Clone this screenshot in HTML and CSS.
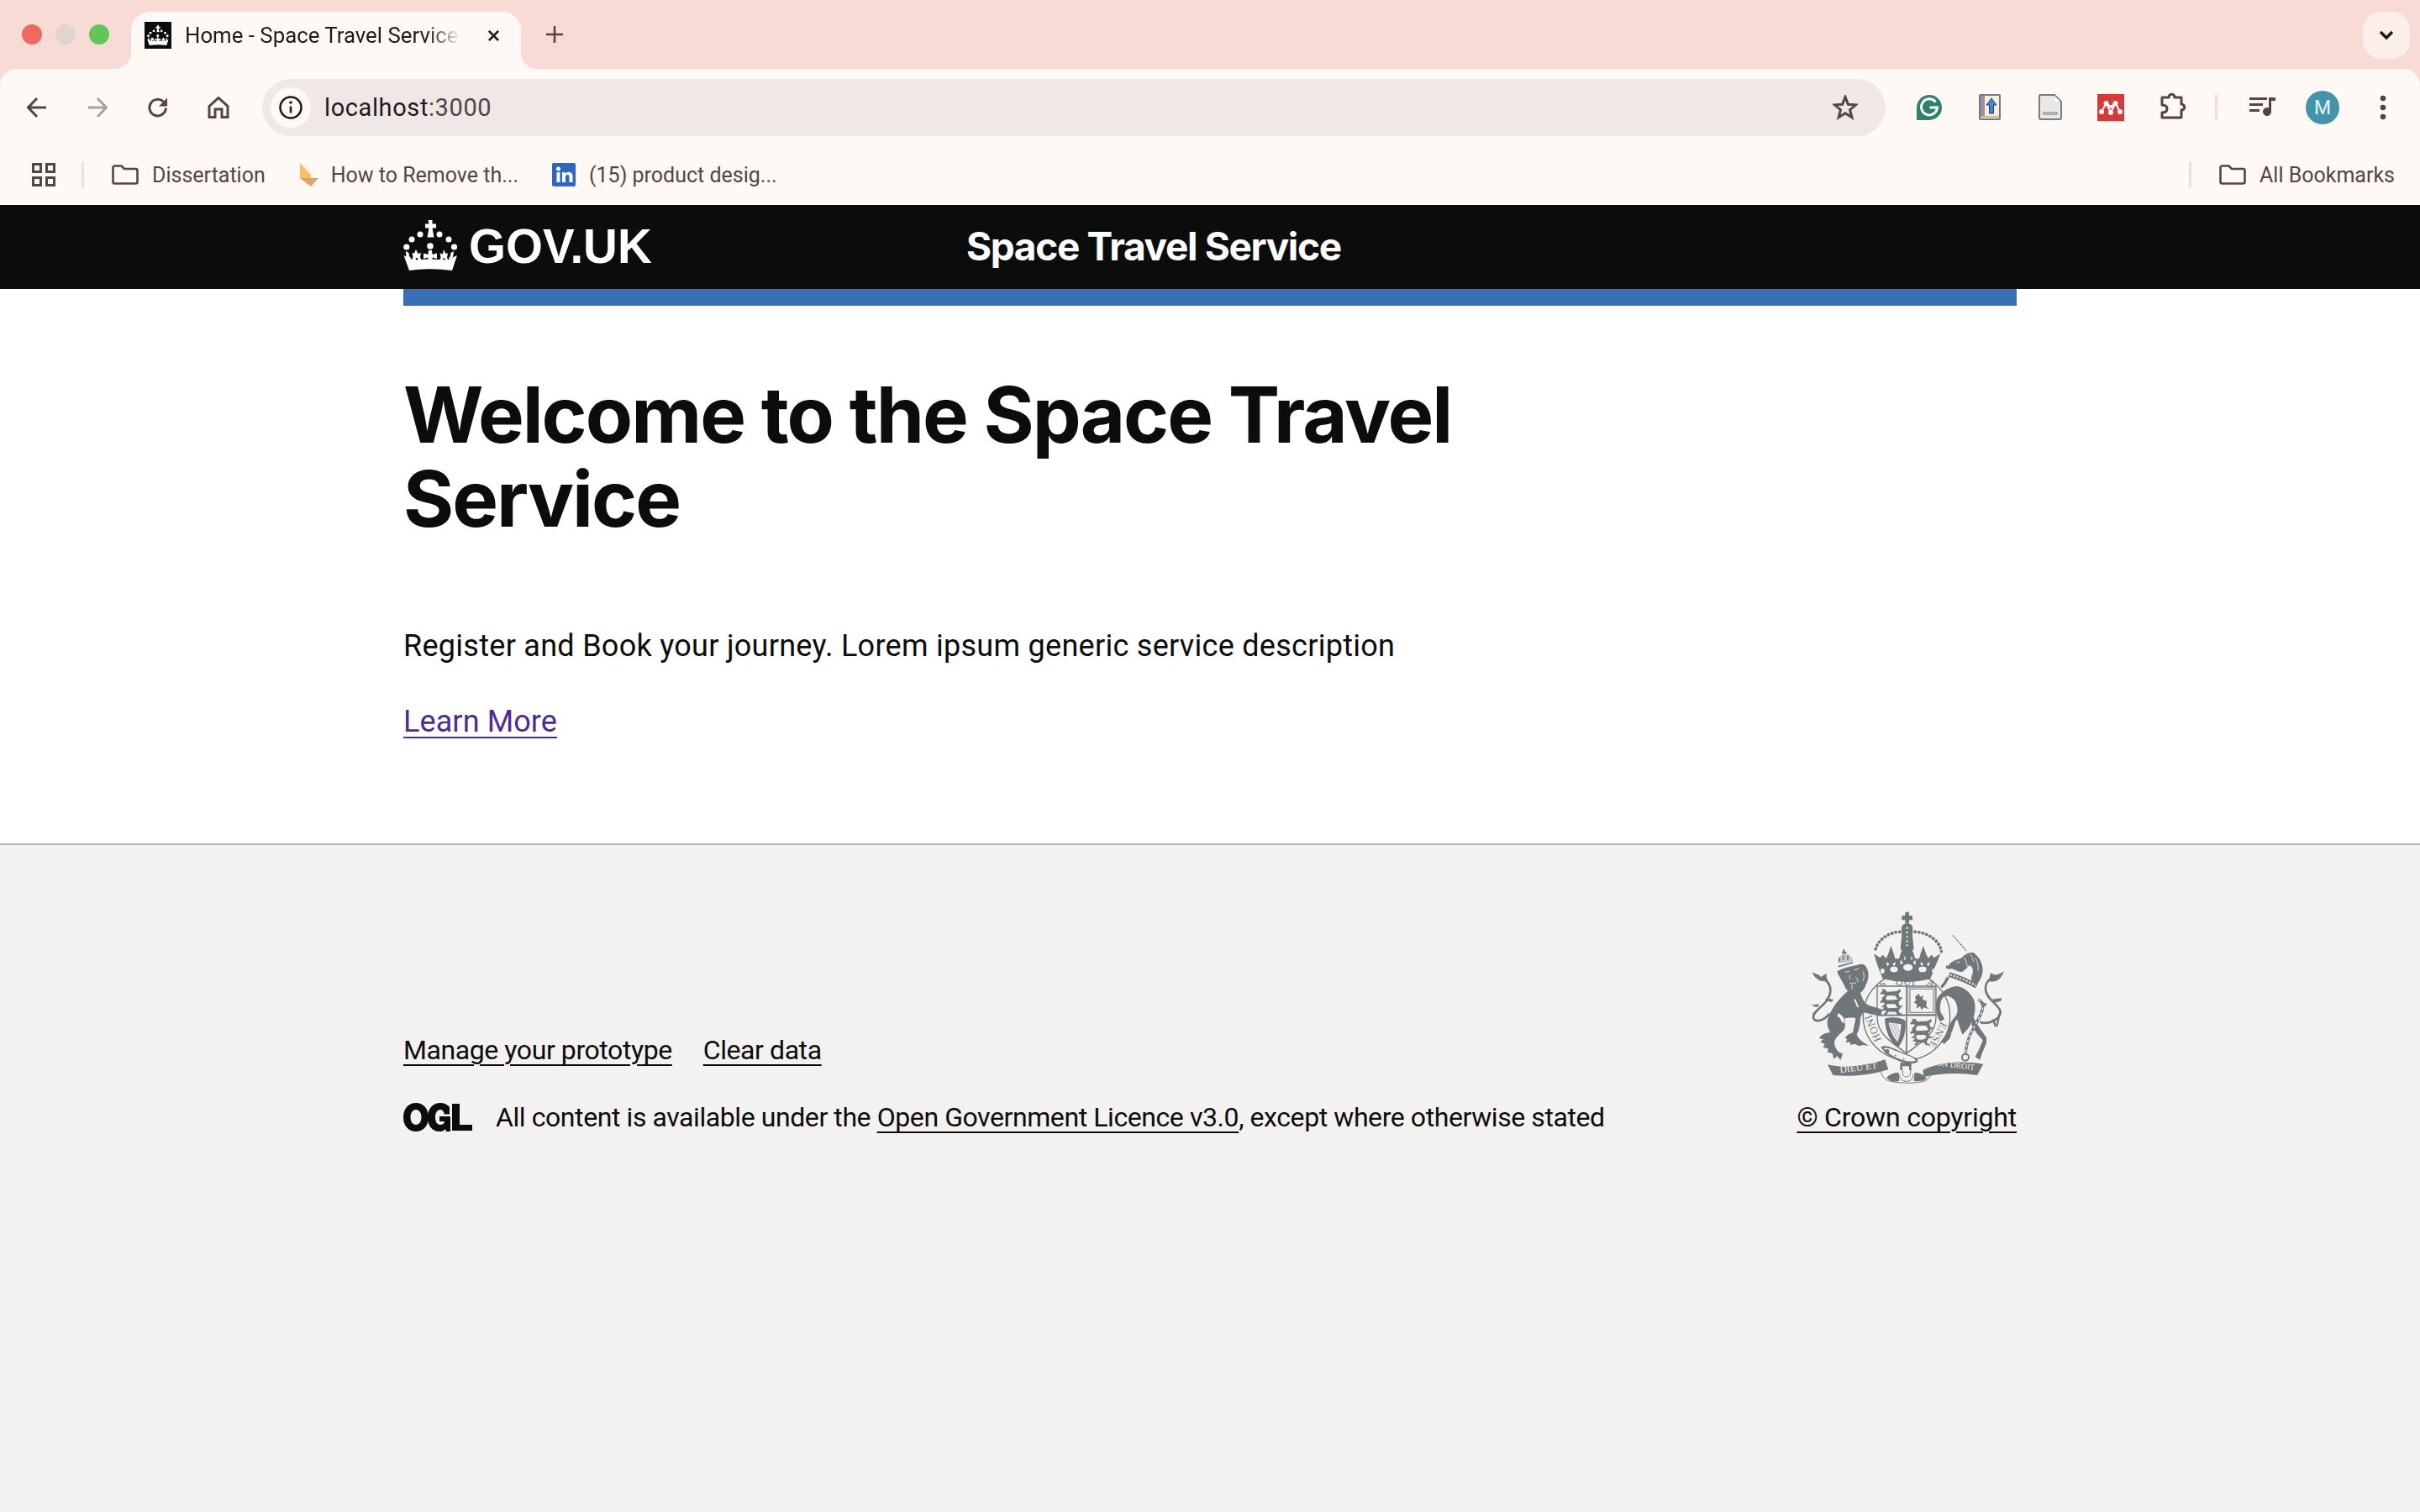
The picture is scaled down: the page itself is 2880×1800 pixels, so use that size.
FILE: index.html
```html
<!DOCTYPE html>
<html lang="en">
<head>
<meta charset="utf-8">
<title>Home - Space Travel Service</title>
<link rel="stylesheet" href="styles.css">
</head>
<body>
<svg class="defs" width="0" height="0" aria-hidden="true">
  <symbol id="crown" viewBox="0 0 65 60">
    <g fill="#fff">
      <path d="M29.500 0h5v4.500h4.500v5h-4.500l2 11h-8l2-11h-4.500v-5h4.500z"/>
      <circle cx="20" cy="17" r="3.500"/><circle cx="43" cy="17" r="3.500"/>
      <circle cx="10" cy="23" r="3.500"/><circle cx="54" cy="23" r="3.500"/>
      <circle cx="3.800" cy="32" r="3.600"/><circle cx="60.500" cy="32" r="3.600"/>
      <circle cx="32" cy="31" r="3.800"/>
      <path d="M.5 42l11 5.500 20.500-1 20.500 1 11.500-5.500-6 18Q32 56.500 7 60z"/>
      <path d="M30 36h4l.5 5 5.500-1.500V46l-5.500-1.500V49h-5v-4.500L24 46v-6.500l5.500 1.500z"/>
      <path d="M15 35l2.500 5 3.500-1-1 5 1.500 4h-4l-.5-3-2 0-.5 3H10l1.500-4-1-5 2.500.5z"/>
      <path d="M48 35l2.500 5 2.500-.5-1 5 1.500 4H50l-.5-3-2 0-.5 3h-4l1.500-4-1-5 3.500 1z"/>
      <path d="M3 37l3.500 2 .5 4 2 2-1 1.500L3.500 44zM60 37l-3.500 2-.5 4-2 2 1 1.500 4-2.500z"/>
    </g>
  </symbol>
  <symbol id="folder" viewBox="0 0 32 24">
    <path fill="none" stroke="currentColor" stroke-width="2.600" stroke-linejoin="round" d="M1.500 3.500a2 2 0 0 1 2-2h8l3.500 3.500h13.500a2 2 0 0 1 2 2v13.500a2 2 0 0 1-2 2h-25a2 2 0 0 1-2-2z"/>
  </symbol>
</svg>

<div class="browser">
  <div class="tabstrip">
    <div class="lights"><span class="light red"></span><span class="light grey"></span><span class="light green"></span></div>
    <div class="tab">
      <span class="favicon"><svg class="favicon-crown"><use href="#crown"/></svg></span>
      <span class="tab-title">Home - Space Travel Service</span>
      <svg class="tab-close" viewBox="0 0 16 16"><path d="M2 2l12 12M14 2L2 14"/></svg>
    </div>
    <svg class="new-tab" viewBox="0 0 20 20"><path d="M10 0v20M0 10h20"/></svg>
    <div class="tab-menu"><svg viewBox="0 0 18 12"><path d="M2 2l7 7 7-7"/></svg></div>
  </div>

  <div class="toolbar">
    <svg class="nav-icon" viewBox="0 0 26 26"><path d="M24 13H3M13 2L2.500 13 13 24"/></svg>
    <svg class="nav-icon nav-off" viewBox="0 0 26 26"><path d="M2 13h21M13 2l10.500 11L13 24"/></svg>
    <svg class="nav-icon" viewBox="0 0 26 26"><path d="M22.500 13.500a9.800 9.800 0 1 1-3-7.500"/><path class="solid" d="M24 1.500v10h-10z"/></svg>
    <svg class="nav-icon" viewBox="0 0 26 26"><path d="M2 11.500L13 1.500l11 10V24.500h-7V15h-8v9.500H2z"/></svg>
    <div class="omnibox">
      <span class="site-info"><svg viewBox="0 0 28 28"><circle cx="14" cy="14" r="12.500"/><path d="M14 12.500v8"/><circle class="dot" cx="14" cy="8" r="1.800"/></svg></span>
      <span class="url"><span class="host">localhost</span>:3000</span>
      <svg class="star" viewBox="0 0 30 30"><path d="M15 2.500l3.400 8.700 9.300.6-7.200 5.900 2.400 9L15 21.700l-7.900 5 2.400-9-7.200-5.900 9.300-.6z"/></svg>
    </div>
    <div class="extensions">
      <svg class="ext ext-g" viewBox="0 0 30 30"><path fill="#33806a" d="M0 30V15a15 15 0 1 1 15 15z"/><path fill="none" stroke="#fff" stroke-width="3" d="M22.500 8.500A9.500 9.500 0 1 0 24.500 15h-9"/></svg>
      <svg class="ext ext-book" viewBox="0 0 26 31"><rect x="1" y="1" width="24" height="29" rx="1" fill="#f8f0dc" stroke="#6f7b86" stroke-width="2"/><rect x="2" y="2" width="5" height="25" fill="#a58aa3"/><path d="M2 27h22" stroke="#c9b68c" stroke-width="2"/><path fill="#3f87dc" stroke="#23405f" d="M15 5l6 8h-3.500v10h-5V13H9z"/></svg>
      <svg class="ext ext-doc" viewBox="0 0 28 31"><path fill="#e8e8e8" stroke="#7b7b7b" stroke-width="2" d="M1 2a1 1 0 0 1 1-1h17l8 8v19a2 2 0 0 1-2 2H3a2 2 0 0 1-2-2z"/><path fill="#fff" d="M19 2v7h7z"/><rect x="5" y="21" width="18" height="4" fill="#aeaeae"/></svg>
      <svg class="ext ext-men" viewBox="0 0 32 32"><rect width="32" height="32" fill="#d43a3a"/><path fill="none" stroke="#fff" stroke-width="2" d="M5 21l5.500-10L16 15l5.500-4L27 21M10.500 11L16 22l5.500-11"/><g fill="#fff"><circle cx="10.500" cy="11" r="3"/><circle cx="21.500" cy="11" r="3"/><circle cx="16" cy="15" r="2"/><circle cx="5" cy="21" r="3"/><circle cx="16" cy="22" r="3"/><circle cx="27" cy="21" r="3"/></g></svg>
      <svg class="ext ext-puz" viewBox="0 0 32 32"><path fill="none" stroke="#544442" stroke-width="3" stroke-linejoin="round" d="M3 6h8c0-5 7-5 7 0h8v8c5 0 5 7 0 7v8a1 1 0 0 1-1 1H3v-6c4 0 6-2 6-4.500S7 15 3 15z"/></svg>
      <span class="vsep"></span>
      <svg class="ext ext-list" viewBox="0 0 31 22"><path fill="#544442" d="M0 0h21v3H0zM0 7h16v3H0zM0 14h12v3H0z"/><path fill="#544442" d="M23 0h8v4h-5v13a5 5 0 1 1-3-4.600z"/></svg>
      <span class="avatar">M</span>
      <svg class="ext ext-dots" viewBox="0 0 8 30"><circle cx="4" cy="4" r="3.300"/><circle cx="4" cy="15" r="3.300"/><circle cx="4" cy="26" r="3.300"/></svg>
    </div>
  </div>

  <div class="bookmarks">
    <svg class="apps" viewBox="0 0 28 28"><path d="M1.500 1.500h9v9h-9zM17.500 1.500h9v9h-9zM1.500 17.500h9v9h-9zM17.500 17.500h9v9h-9z"/></svg>
    <span class="bsep"></span>
    <a class="bm bm-first"><svg class="bm-folder"><use href="#folder"/></svg><span>Dissertation</span></a>
    <a class="bm bm-second"><svg class="bm-icon-b" viewBox="0 0 22 28"><path fill="#f5c26b" d="M0 0l13 14v5H0z"/><path fill="#e2a263" d="M0 18h22L13 28z"/></svg><span>How to Remove th...</span></a>
    <a class="bm bm-third"><svg class="bm-icon-in" viewBox="0 0 28 28"><rect width="28" height="28" rx="2" fill="#2f66bf"/><g fill="#fff"><circle cx="7.500" cy="7" r="2.500"/><path d="M5.500 11h4v12h-4zM12 11h4v1.700c1-1.300 2.300-2 4-2 3 0 4.500 2 4.500 5.300v7h-4v-6.500c0-1.700-.7-2.600-2.100-2.600-1.500 0-2.400 1-2.400 2.700V23h-4z"/></g></svg><span>(15) product desig...</span></a>
    <span class="bspacer"></span>
    <span class="bsep"></span>
    <a class="bm bm-all"><svg class="bm-folder"><use href="#folder"/></svg><span>All Bookmarks</span></a>
  </div>
</div>

<header class="gov-header">
  <div class="width-container header-inner">
    <a class="logo"><svg class="logo-crown"><use href="#crown"/></svg><span class="logo-text">GOV.UK</span></a>
    <a class="service-name">Space Travel Service</a>
  </div>
</header>
<div class="width-container"><div class="blue-bar"></div></div>

<main class="width-container main">
  <h1 class="title">Welcome to the Space Travel Service</h1>
  <p class="body-text">Register and Book your journey. Lorem ipsum generic service description</p>
  <p class="body-link"><a class="link">Learn More</a></p>
</main>

<footer class="footer">
  <div class="width-container footer-inner">
    <div class="footer-meta">
      <ul class="footer-links">
        <li><a class="flink">Manage your prototype</a></li>
        <li><a class="flink">Clear data</a></li>
      </ul>
      <div class="licence">
        <svg class="ogl" viewBox="0 0 82 34"><path fill="#0b0c0c" fill-rule="evenodd" d="M15 0c9 0 15 7 15 17s-6 17-15 17S0 27 0 17 6 0 15 0zm0 8c-4 0-6.500 4-6.500 9s2.500 9 6.500 9 6.500-4 6.500-9-2.500-9-6.500-9z"/><path fill="#0b0c0c" d="M44 0c5 0 8.500 2 11 5v8.500h-6C48 10 46.500 8 44 8c-4 0-6 4-6 9s2 9 6 9c3 0 4.500-1.500 5-4h-6v-6h13v18h-5l-1-3c-2 2.500-4.500 3-7 3-9 0-14-7-14-17S35 0 44 0z"/><path fill="#0b0c0c" d="M58 1h9v25h15v7H58z"/></svg>
        <span class="licence-text">All content is available under the <a class="flink">Open Government Licence v3.0</a>, except where otherwise stated</span>
      </div>
    </div>
    <div class="copyright">
      <svg class="arms" viewBox="2150 1080 240 215">
        <defs>
          <path id="leopard" d="M0 8l5-5-2-3 7 1 2 4 18-1 6-4 1 5-4 3 2 7h5l-1 3h-8l-4-6-14 0-4 6H3l2-3 4-4-4-2-3 1z"/>
        </defs>

        <!-- garter ring -->
        <g transform="translate(2120 1070) scale(.33333)">
          <circle class="a-line" cx="450" cy="420" r="155" stroke-width="4"/>
        </g>
        <text class="a-ring" transform="translate(2240 1238) rotate(-112)">HONI</text>
        <text class="a-ring" transform="translate(2241 1177) rotate(-35)">S</text>
        <text class="a-ring" transform="translate(2256.700 1173.300)">QUI</text>
        <text class="a-ring" transform="translate(2293 1172) rotate(28)">A</text>
        <text class="a-ring" transform="translate(2311 1216) rotate(117)">ENSE</text>

        <!-- shield -->
        <g transform="translate(2120 1070) scale(.33333)">
          <path class="a-bg" stroke="#6f777b" stroke-width="4" d="M345 312h210v112c0 62-58 92-105 128-47-36-105-66-105-128z"/>
          <path class="a-line" stroke-width="5" d="M450 312v240M345 416h210"/>
          <g class="a-fill">
            <use href="#leopard" transform="translate(355 322) scale(2)"/>
            <use href="#leopard" transform="translate(355 352) scale(2)"/>
            <use href="#leopard" transform="translate(362 382) scale(1.800)"/>
            <use href="#leopard" transform="translate(462 428) scale(2.100)"/>
            <use href="#leopard" transform="translate(462 462) scale(2)"/>
            <use href="#leopard" transform="translate(472 496) scale(1.500)"/>
            <path d="M480 350l14-12 4 12 12-4-4 12 16 8-2 18 10 10-20-6-6 10-6-14-14 8 4-14-12-8 8-8z"/>
          </g>
          <rect class="a-line" x="462" y="322" width="84" height="84" stroke-width="3"/>
          <rect class="a-line" x="456" y="316" width="96" height="96" stroke-width="2"/>
          <path class="a-fill" d="M372 428c30-8 58-4 74 8 2 34-4 68-26 94-30-18-46-58-48-102z"/>
          <path class="a-bg" d="M386 442l44 6c0 24-4 44-12 62-18-16-28-42-32-68z"/>
          <path class="a-line" stroke-width="2" d="M392 446l24 56M402 446l20 46M412 448l14 30M388 458l22 52"/>
        </g>

        <!-- royal crown -->
        <g transform="translate(2220 1080) scale(.33333)">
          <path class="a-fill" d="M145 17h14v13h12v16h-12v12h-14V46h-12V30h12z"/>
          <path class="a-fill" d="M152 58c15 0 22 10 20 24l-1 20 5 50h-48l5-50-1-20c-2-14 5-24 20-24z"/>
          <g class="a-bg"><circle cx="152" cy="74" r="3.500"/><circle cx="152" cy="90" r="3.500"/><circle cx="152" cy="106" r="3.500"/><circle cx="152" cy="122" r="3.500"/><circle cx="152" cy="136" r="3.500"/></g>
          <path class="a-dots" d="M126 88C80 90 42 122 38 158M180 88C228 90 270 122 274 158"/>
          <path class="a-fill" d="M33 166l22 14 10-10 12 12 8-16 9-28 10 28 5 18h14l6-20 6-14h34l6 14 6 20h14l5-18 10-28 9 28 8 16 12-12 10 10 22-14-18 44-18 46q-85 22-170 0l-18-46z"/>
          <g class="a-bg">
            <ellipse cx="105" cy="222" rx="14" ry="10"/><ellipse cx="155" cy="215" rx="17" ry="12"/><ellipse cx="207" cy="222" rx="14" ry="10"/>
            <ellipse cx="64" cy="228" rx="7" ry="9"/><ellipse cx="248" cy="228" rx="7" ry="9"/>
            <path d="M76 196l12 6-6 10zM112 196l-12 6 6 10zM128 188l10 10-10 8zM182 188l-10 10 10 8zM198 196l12 6-6 10zM234 196l-12 6 6 10z"/>
            <path d="M146 176h-4v12h4zM166 176h4v12h-4z"/>
          </g>
        </g>

        <!-- lion -->
        <g transform="translate(2150 1130) scale(.33333)">
          <path class="a-fill" d="M150 150C125 170 95 205 80 245c-6 17-4 30 8 53-18 0-33 7-40 20l14 4-10 10 16 6-6 12 18 5-2 13 17 4 5 20 12-10 13 14 7-24c-14 0-28-17-30-37 0-17 18-30 33-45 7-10 7-28 3-42 12-3 27-5 40-2-2 19-8 39-10 52-8 2-20 8-28 18l8 6-6 10h16l2 10 15-4 15 8 15-4 21 3c-16-10-36-20-44-40 10-20 13-40 13-60l10-20c15 3 40 13 63 11l6-20c-19-8-42-11-59-21-10-10-15-25-20-40z"/>
          <path class="a-bg" d="M116 228c8 4 14 10 20 18l3 20-12-8c-2-10-6-16-15-18zM176 176c6 10 8 20 14 30l-6 2c-4-10-8-20-12-26z"/>
          <path class="a-stroke" stroke-width="8" d="M85 230C60 262 25 262 27 240c3-25 58-45 61-90 2-25-18-42-33-50"/>
          <path class="a-fill" d="M72 114c-20 3-37-6-50-32 13 8 28 8 33 18 5-5 13-10 21-12-4 10-1 20 9 34zM46 205c-10 3-18 0-24-8 8 2 14 2 24-2zM72 175l26 4-4 10-24-6zM38 215l-14 16 8 3 12-14z"/>
          <path class="a-fill" d="M112 80c13-10 43-18 68-22 15-8 30-6 35 4 13 18 10 48 0 63-5 20-20 35-37 37-18-4-33-12-40-32-8-18-20-32-26-50z"/>
          <path class="a-stroke-bg" stroke-width="2.500" d="M140 82l16-4M172 74l18-4M158 92c-2 8-2 12 2 16M178 100c6 4 8 10 8 18M156 122l24-2M165 125v18M205 80c4 12 4 22 0 34"/>
          <path class="a-soft" d="M116 50c-4-18 8-30 24-32 16 0 28 10 28 26z"/>
          <path class="a-fill" d="M131 2l7-1 2 8 7 2-3 6h-12l-4-6 5-2z"/>
          <path class="a-stroke" stroke-width="5" d="M116 62l52-14M120 30v14M134 22v16M150 22v16"/>
        </g>

        <!-- unicorn -->
        <g transform="translate(2270 1110) scale(.33333)">
          <path class="a-horn" d="M165 10l48 56"/>
          <path class="a-fill" d="M110 235c15-25 40-40 70-43 25 3 48 23 60 48 8 25 5 50-5 75-7 15-15 30-23 37l-12 13c-10-20-15-45-20-55-8 8-10 30-20 48l-5 20-20 20-13-8 18-25c8-20 15-45 30-60 8-7 15-20 10-40-2-15-10-30-30-37-15-3-25 7-28 22-4 20-4 35 6 45l7 15-15 8c-15-18-20-58-10-83z"/>
          <path class="a-fill" d="M235 295c5 15 27 50 50 80v20l-15 35-8 25-17-10 15-30 12-30-22-25-18-30z"/>
          <path class="a-fill" d="M150 118c5-13 25-20 45-26 10-12 25-22 43-20 20 13 34 38 34 63-2 25-14 45-24 53-13-8-23-23-13-38 5-20-3-32-13-32-7 12-17 20-27 24-15-2-25-10-35-12l-12 2zM142 118l10 2-4 8-8 2z"/>
          <path class="a-stroke-bg" stroke-width="2.500" d="M178 108l14-3M205 90c8 12 10 22 12 34M245 90c8 14 12 28 10 46M228 78c6 10 10 18 12 28"/>
          <path class="a-stroke" stroke-width="18" d="M152 150c30 10 70 25 98 42"/>
          <path class="a-dash" d="M156 151c30 10 66 24 92 40"/>
          <path class="a-stroke" stroke-width="10" d="M148 160c-6 14-14 26-24 36"/>
          <path class="a-chain" stroke-width="10" d="M255 240c22 10 22 30 6 60-10 24-30 50-40 80-5 15-9 30-10 50"/>
          <path class="a-dash2" d="M255 240c22 10 22 30 6 60-10 24-30 50-40 80-5 15-9 30-10 50"/>
          <circle class="a-line" cx="210" cy="446" r="12" stroke-width="6"/>
          <path class="a-stroke" stroke-width="8" d="M262 320c28 12 73-10 73-35 0-25-50-45-53-80-2-25 13-40 33-45"/>
          <path class="a-fill" d="M290 172c10-12 8-22 10-27 10 7 18 7 25 5 10-2 17-8 23-12-6 17-18 34-33 37-8 2-16 2-25-3zM300 240l40-6-4 12-28 6zM286 255l-18-8-4 8 18 10zM336 285l-10 50-6-2 6-40zM312 308l10 28-7 2-10-26z"/>
        </g>

        <!-- garter motto, buckle and compartment -->
        <g transform="translate(2120 1070) scale(.33333)">
          <path class="a-fill" d="M358 530c20-12 40 4 102 28 20 8 32 14 30 24-30 20-102-8-132-52z"/>
          <path class="a-bg" d="M368 534c16-6 34 6 92 28 12 5 20 10 22 16-26 10-88-10-114-44z"/>
          <g class="a-fill"><circle cx="410" cy="560" r="3"/><circle cx="440" cy="572" r="3"/><circle cx="380" cy="545" r="8"/></g>
          <path class="a-fill" d="M427 586h40v26h-8v-14h-24v14h-8z"/>
          <path class="a-fill" d="M378 640c8-12 32-22 44-18l2 28c-16 6-34 2-46-10zM478 622c14-4 34 8 44 20-12 10-34 12-46 8z"/>
          <path class="a-line" stroke-width="3" d="M355 610c6 20 14 34 30 40 26 6 54 8 66 8 20 0 48-2 66-8 12-6 20-18 24-34M425 628c0 16 10 24 24 24s24-8 24-24"/>
          <path class="a-line" stroke-width="3" d="M436 612c-2 18 4 24 14 24s16-6 14-24"/>
          <path class="a-fill" d="M168 592c60 14 130 6 205-18l12 36c-70 22-140 26-198 20z"/>
          <path class="a-fill" d="M508 612c60-32 140-34 216-22l-22 40c-60-10-130-8-190 6z"/>
          <text class="a-motto" transform="translate(213 622) rotate(-7)">DIEU ET</text>
          <text class="a-motto a-motto-r" transform="translate(530 592) rotate(7)">MON DROIT</text>
        </g>
      </svg>
      <a class="flink crown-link">© Crown copyright</a>
    </div>
  </div>
</footer>
</body>
</html>
```

FILE: styles.css
```css
* { box-sizing: border-box; }
html, body { margin: 0; padding: 0; }
body {
  width: 2880px;
  min-height: 1800px;
  display: flex;
  flex-direction: column;
  background: #fff;
  color: #0b0c0c;
  font-family: "Inter", "Liberation Sans", sans-serif;
}
.defs { position: absolute; }
a { color: inherit; }

/* browser chrome */
.browser { background: #f8dbd5; height: 244px; font-family: "Roboto", "Liberation Sans", sans-serif; }
.tabstrip { height: 82px; display: flex; align-items: flex-start; position: relative; }
.lights { display: flex; gap: 16px; padding: 29px 0 0 26px; width: 156px; }
.light { width: 24px; height: 24px; border-radius: 50%; }
.red { background: #f0695f; }
.grey { background: #e0d4d1; }
.green { background: #60c655; }
.tab {
  width: 464px; height: 68px; margin-top: 14px;
  background: #fff9f6; border-radius: 22px 22px 0 0;
  display: flex; align-items: center; padding: 0 24px 12px 16px; position: relative;
}
.tab::before, .tab::after {
  content: ""; position: absolute; bottom: 0; width: 20px; height: 20px;
}
.tab::before { left: -20px; background: radial-gradient(circle at 0 0, transparent 20px, #fff9f6 20.500px); }
.tab::after { right: -20px; background: radial-gradient(circle at 100% 0, transparent 20px, #fff9f6 20.500px); }
.favicon { width: 32px; height: 32px; background: #0b0c0c; display: flex; align-items: center; justify-content: center; }
.favicon-crown { width: 26px; height: 24px; }
.tab-title {
  margin-left: 16px; width: 328px; font-size: 25.800px; color: #1f1b1b; white-space: nowrap; overflow: hidden;
  -webkit-mask-image: linear-gradient(90deg, #000 88%, transparent 100%);
  mask-image: linear-gradient(90deg, #000 88%, transparent 100%);
}
.tab-close { width: 15px; height: 15px; margin-left: 32px; fill: none; stroke: #1f1b1b; stroke-width: 3; }
.new-tab { width: 20px; height: 20px; margin: 31px 0 0 30px; fill: none; stroke: #544442; stroke-width: 2.600; }
.tab-menu {
  position: absolute; left: 2812px; top: 14px; width: 56px; height: 56px; border-radius: 22px;
  background: #fceeea; display: flex; align-items: center; justify-content: center;
}
.tab-menu svg { width: 18px; height: 12px; fill: none; stroke: #1f1b1b; stroke-width: 3.500; }

.toolbar {
  height: 80px; background: #fff9f6; border-radius: 20px 20px 0 0;
  display: flex; align-items: flex-start; padding: 12px 0 0 31px; position: relative;
}
.nav-icon { width: 26px; height: 26px; margin: 21px 46px 0 0; fill: none; stroke: #544442; stroke-width: 3; }
.nav-icon .solid { fill: #544442; stroke: none; }
.nav-off { stroke: #aaa19f; }
.omnibox {
  position: absolute; left: 312px; top: 12px; width: 1932px; height: 68px; border-radius: 34px;
  background: #f0e7e7; display: flex; align-items: center; padding: 0 0 0 10px;
}
.site-info { width: 48px; height: 48px; border-radius: 50%; background: #fff9f6; display: flex; align-items: center; justify-content: center; }
.site-info svg { width: 28px; height: 28px; fill: none; stroke: #1f1b1b; stroke-width: 2.600; }
.site-info .dot { fill: #1f1b1b; stroke: none; }
.url { margin-left: 16px; font-size: 29px; color: #544442; flex: 1; letter-spacing: .6px; }
.host { color: #1f1b1b; }
.star { width: 30px; height: 30px; margin-right: 33px; fill: none; stroke: #544442; stroke-width: 3; }
.extensions { position: absolute; left: 0; top: 0; width: 2880px; height: 80px; pointer-events: none; }
.ext { position: absolute; }
.ext-g { left: 2281px; top: 31px; width: 30px; height: 30px; }
.ext-book { left: 2355px; top: 30px; width: 26px; height: 31px; }
.ext-doc { left: 2426px; top: 30px; width: 28px; height: 31px; }
.ext-men { left: 2496px; top: 30px; width: 32px; height: 32px; }
.ext-puz { left: 2570px; top: 28px; width: 32px; height: 32px; }
.vsep { position: absolute; left: 2636px; top: 30px; width: 3px; height: 32px; background: #f8dbd5; border-radius: 2px; }
.ext-list { left: 2677px; top: 34px; width: 31px; height: 22px; }
.avatar {
  position: absolute; left: 2744px; top: 26px; width: 40px; height: 40px; border-radius: 50%;
  background: #4295a8; color: #e8f4f6; font-size: 23px; display: flex; align-items: center; justify-content: center;
}
.ext-dots { left: 2832px; top: 31px; width: 8px; height: 30px; fill: #544442; }

.bookmarks {
  height: 82px; background: #fff9f6; display: flex; align-items: center; padding: 10px 30px 0 38px;
  color: #544442; font-size: 25px;
}
.apps { width: 28px; height: 28px; fill: none; stroke: #544442; stroke-width: 3; }
.bsep { width: 3px; height: 32px; background: #f8dbd5; border-radius: 2px; }
.apps + .bsep { margin-left: 31px; }
.bm { display: flex; align-items: center; }
.bm-folder { width: 32px; height: 24px; margin-right: 16px; }
.bm-first { margin-left: 33px; }
.bm-second { margin-left: 41px; }
.bm-third { margin-left: 40px; }
.bm-icon-b { width: 22px; height: 28px; margin-right: 15px; }
.bm-icon-in { width: 28px; height: 28px; margin-right: 16px; }
.bspacer { flex: 1; }
.bm-all { margin-left: 33px; }

/* GOV.UK header */
.width-container { width: 1920px; margin-left: 480px; }
.gov-header { background: #0b0c0c; height: 100px; color: #fff; }
.header-inner { display: flex; align-items: center; height: 100px; }
.logo { display: flex; align-items: center; width: 670px; }
.logo-crown { width: 65px; height: 60px; margin: -4px 13px 0 0; }
.logo-text { font: 700 56.500px/1 "Liberation Sans", sans-serif; margin-top: 1px; }
.service-name { font-weight: 700; font-size: 46px; letter-spacing: -1.350px; margin-top: -3px; }
.blue-bar { height: 20px; background: #3a6eb5; }

/* main */
.main { flex: none; height: 640px; padding-top: 80px; }
.title { margin: 0 0 100px; width: 1290px; font-weight: 700; font-size: 92px; line-height: 100px; letter-spacing: -2px; }
.body-text { margin: 0; font-family: "Roboto", "Liberation Sans", sans-serif; font-size: 36px; line-height: 50px; letter-spacing: .28px; }
.body-link { margin: 40px 0 0; font-family: "Roboto", "Liberation Sans", sans-serif; font-size: 36px; line-height: 50px; letter-spacing: .1px; color: #4c2c92; }
.link { text-decoration: underline; text-decoration-thickness: 2px; text-underline-offset: 6px; }

/* footer */
.footer { flex: 1; background: #f3f2f1; border-top: 2px solid #b1b4b6; padding-top: 74px; font-family: "Roboto", "Liberation Sans", sans-serif; font-size: 32px; line-height: 40px; letter-spacing: -.42px; }
.footer-inner { display: flex; justify-content: space-between; align-items: flex-end; }
.footer-links { list-style: none; margin: 0 0 40px; padding: 0; display: flex; gap: 37px; }
.flink { text-decoration: underline; text-decoration-thickness: 2px; text-underline-offset: 6px; }
.crown-link { letter-spacing: -.2px; }
.licence { display: flex; align-items: center; }
.ogl { width: 82px; height: 34px; margin-right: 28px; }
.copyright { display: flex; flex-direction: column; align-items: center; }
.arms { width: 240px; height: 215px; margin-bottom: 15px; }

/* coat of arms */
.a-fill { fill: #6f777b; }
.a-bg { fill: #f3f2f1; }
.a-soft { fill: #c3c6c7; }
.a-line { fill: none; stroke: #6f777b; }
.a-stroke { fill: none; stroke: #6f777b; }
.a-stroke-bg { fill: none; stroke: #f3f2f1; }
.a-dots { fill: none; stroke: #6f777b; stroke-width: 11; stroke-linecap: round; stroke-dasharray: 1 13; }
.a-horn { fill: none; stroke: #6f777b; stroke-width: 4; stroke-dasharray: 7 3; }
.a-dash { fill: none; stroke: #f3f2f1; stroke-width: 6; stroke-dasharray: 6 6; }
.a-chain { fill: none; stroke: #6f777b; }
.a-dash2 { fill: none; stroke: #f3f2f1; stroke-width: 4; stroke-dasharray: 9 9; }
.a-ring { font: 400 12.500px "Liberation Serif", serif; fill: #6f777b; letter-spacing: .5px; }
.a-motto { font: 400 35px "Liberation Serif", serif; fill: #f3f2f1; letter-spacing: 0; }
.a-motto-r { font-size: 29px; }
```
